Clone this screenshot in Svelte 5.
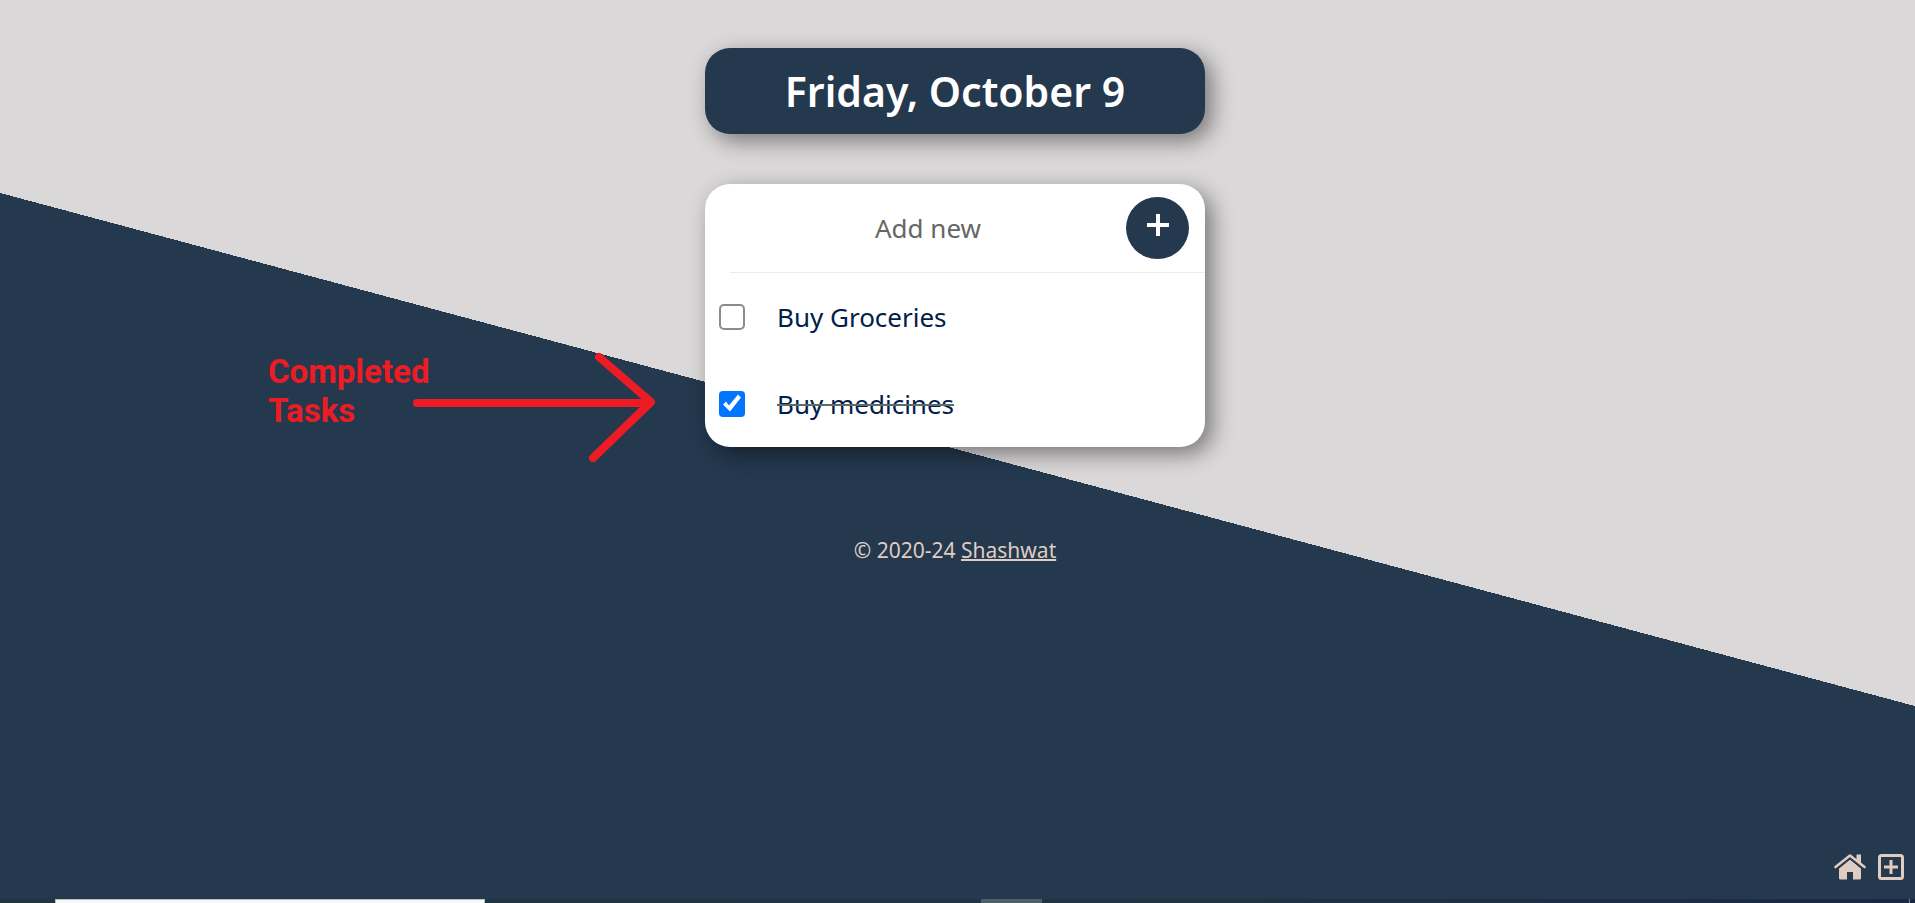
<script>
  let tasks = $state([
    { id: 'task-1', name: 'Buy Groceries', done: false },
    { id: 'task-2', name: 'Buy medicines', done: true }
  ]);
  let draft = $state('');

  function addTask(event) {
    event.preventDefault();
    const name = draft.trim();
    if (!name) return;
    tasks.push({ id: `task-${tasks.length + 1}`, name, done: false });
    draft = '';
  }
</script>

<div class="page">
  <main>
    <h1>Friday, October 9</h1>

    <section class="card">
      <form onsubmit={addTask}>
        <input class="draft" type="text" placeholder="Add new" aria-label="Add new" autocomplete="off" bind:value={draft} />
        <button type="submit" aria-label="Add">
          <svg viewBox="0 0 22 22" width="22" height="22" aria-hidden="true">
            <path d="M9 0h4v9h9v4h-9v9h-4v-9h-9v-4h9z" fill="#fff" />
          </svg>
        </button>
      </form>
      <ul>
        {#each tasks as task (task.id)}
          <li>
            <input id={task.id} class="check" type="checkbox" bind:checked={task.done} />
            <label for={task.id} class:done={task.done}>{task.name}</label>
          </li>
        {/each}
      </ul>
    </section>

    <footer>© 2020-24 <a href="#author">Shashwat</a></footer>
  </main>

  <aside class="note">
    <p>Completed Tasks</p>
    <svg viewBox="0 0 244 110" width="244" height="110" aria-hidden="true">
      <path d="M5 51H238M187 5L239 50L181 106" fill="none" stroke="#ed1c24" stroke-width="8" stroke-linecap="round" stroke-linejoin="round" />
    </svg>
  </aside>

  <nav>
    <a href="#home" aria-label="Home">
      <svg viewBox="0 0 32 26" width="32" height="26" aria-hidden="true">
        <path d="M16 5.500L27 14.500V24.200Q27 25.500 25.700 25.500H19V18H13V25.500H6.300Q5 25.500 5 24.200V14.500Z" fill="#dfcdc3" />
        <path d="M1.500 13L16 1.500L30.500 13" fill="none" stroke="#dfcdc3" stroke-width="2.600" stroke-linecap="round" stroke-linejoin="round" />
        <path d="M22.500 0.500H27V10L22.500 6.500Z" fill="#dfcdc3" />
        <path d="M4 14.200L16 4.500L28 14.200" fill="none" stroke="#24384e" stroke-width="1.200" />
      </svg>
    </a>
    <a href="#new" aria-label="New list">
      <svg viewBox="0 0 26 26" width="26" height="26" aria-hidden="true">
        <rect x="1.500" y="1.500" width="23" height="23" rx="2" fill="none" stroke="#dfcdc3" stroke-width="3" />
        <path d="M11.500 6h3v5.500h5.500v3h-5.500v5.500h-3v-5.500h-5.500v-3h5.500z" fill="#dfcdc3" />
      </svg>
    </a>
  </nav>
</div>
<div class="taskbar">
  <span class="search"></span>
  <span class="active"></span>
  <span class="peek"></span>
</div>

<style>
  :global(html), :global(body), :global(#app) {
    height: 100%;
  }
  :global(body) {
    margin: 0;
    overflow: hidden;
  }
  :global(#app) {
    display: flex;
    flex-direction: column;
  }
  .page {
    position: relative;
    flex: 1;
    box-sizing: border-box;
    padding: 48px 5px 0 0;
    background: linear-gradient(15deg, #24384e 50%, #dbd8d9 50%);
    font-family: "Noto Sans", "Open Sans", sans-serif;
    color: #00204a;
  }
  main {
    display: flex;
    flex-direction: column;
    align-items: center;
  }
  h1,
  .card {
    width: 500px;
    max-width: 100%;
    border-radius: 25px;
    box-shadow: 7px 7px 22px rgba(0, 0, 0, 0.45);
  }
  h1 {
    margin: 0 0 50px;
    padding: 13px 0;
    background: #24384e;
    color: #fff;
    font-size: 41px;
    line-height: 60px;
    font-weight: 600;
    text-align: center;
  }
  .card {
    background: #fff;
    overflow: hidden;
  }
  form {
    display: flex;
    align-items: center;
    height: 88px;
    margin-left: 25px;
    padding-right: 16px;
    border-bottom: 1px solid #ececec;
  }
  .draft {
    flex: 1;
    min-width: 0;
    height: 60px;
    padding: 0;
    border: 0;
    outline: 0;
    background: transparent;
    color: #00204a;
    font: 26px/36px "Noto Sans", "Open Sans", sans-serif;
    text-align: center;
  }
  .draft::placeholder {
    color: #666;
    opacity: 1;
  }
  button {
    display: flex;
    justify-content: center;
    align-items: flex-start;
    box-sizing: border-box;
    width: 63px;
    height: 62px;
    padding: 17px 0 0;
    border: 0;
    border-radius: 50%;
    background: #24384e;
  }
  ul {
    margin: 0;
    padding: 0;
    list-style: none;
  }
  li {
    display: flex;
    align-items: center;
    gap: 32px;
    height: 87px;
    padding-left: 14px;
  }
  .check {
    appearance: none;
    box-sizing: border-box;
    width: 26px;
    height: 26px;
    margin: 0;
    border: 2px solid #8b8b8b;
    border-radius: 5px;
    background: #fff;
  }
  .check:checked {
    border: 0;
    border-radius: 4px;
    background: #0075ff;
  }
  .check:checked::after {
    content: "";
    display: block;
    height: 26px;
    background: #fff;
    clip-path: polygon(4px 14px, 7px 11px, 10px 15px, 19px 4px, 22px 7px, 11px 21px);
  }
  label {
    font-size: 26px;
    line-height: 36px;
  }
  .done {
    text-decoration: line-through 2px #5f6b6b;
  }
  footer {
    margin-top: 88px;
    color: #dfcdc3;
    font-size: 21px;
    line-height: 30px;
  }
  footer a {
    color: inherit;
    text-decoration-thickness: 2px;
  }
  .note {
    position: absolute;
    top: 352px;
    left: 268px;
    display: flex;
  }
  .note p {
    width: 144px;
    margin: 0;
    color: #ed1c24;
    font: 700 33px/39px Roboto, sans-serif;
  }
  nav {
    position: absolute;
    right: 11px;
    bottom: 19px;
    display: flex;
    gap: 12px;
  }
  nav a,
  nav svg {
    display: block;
  }
  .taskbar {
    display: flex;
    height: 4px;
    background: linear-gradient(90deg, #20363e, #1f3543 60%, #1d2744);
  }
  .search {
    box-sizing: border-box;
    width: 430px;
    margin-left: 55px;
    border: 1px solid #bdbdbd;
    border-bottom: 0;
    background: #f8f8f8;
  }
  .active {
    width: 61px;
    margin-left: 496px;
    background: #4d5f67;
  }
  .peek {
    width: 1px;
    margin: 0 5px 0 auto;
    background: #7d8290;
  }
</style>
